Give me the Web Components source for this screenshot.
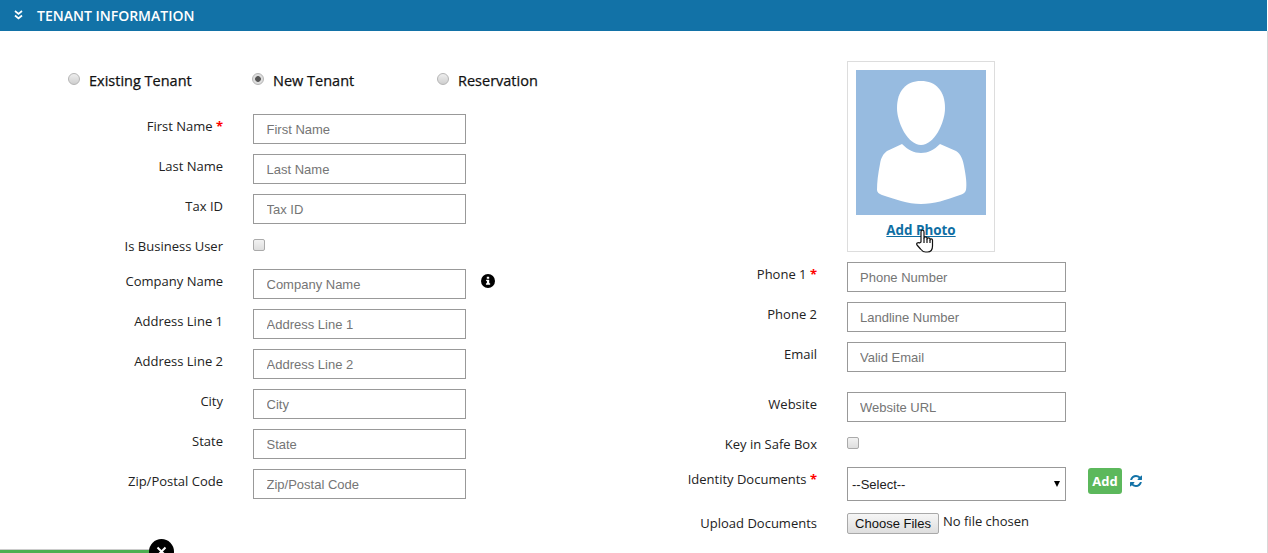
<!DOCTYPE html>
<html>
<head>
<meta charset="utf-8">
<title>Tenant Information</title>
<style>
    html, body { margin: 0; height: 100%; overflow: hidden; background: #fff; }
    body { font-family: 'Open Sans', sans-serif; color: #222; }
</style>
</head>
<body>
<tenant-page></tenant-page>

<script>
class SectionHeader extends HTMLElement {
    constructor() {
        super();
        this.attachShadow({ mode: 'open' });
        this.shadowRoot.innerHTML = `
            <style>
                :host {
                    display: flex;
                    align-items: center;
                    height: 31px;
                    margin-right: 1px;
                    padding-left: 14px;
                    gap: 14px;
                    background: #1272a7;
                    color: #fff;
                    font: 600 14px 'Open Sans', sans-serif;
                }
                svg { width: 9px; height: 10px; margin-bottom: 1px; }
            </style>
            <svg viewBox="0 0 9 10" fill="none" stroke="#fff" stroke-width="1.7">
                <path d="M1 1l3.500 3L8 1M1 5.500l3.500 3 3.500-3"/>
            </svg>
            <slot></slot>
        `;
    }
}

class RadioOption extends HTMLElement {
    constructor() {
        super();
        this.attachShadow({ mode: 'open' });
        this.shadowRoot.innerHTML = `
            <style>
                :host {
                    display: flex;
                    align-items: center;
                    gap: 9px;
                    font: 400 14.5px 'Open Sans', sans-serif;
                    -webkit-text-stroke: 0.25px #111;
                    color: #111;
                }
                input {
                    appearance: none;
                    margin: 0 0 3px;
                    width: 12px;
                    height: 12px;
                    border-radius: 50%;
                    border: 1px solid #b5b5b5;
                    background: linear-gradient(#eee, #cfcfcf);
                }
                input:checked {
                    background: radial-gradient(circle, #555 0 2.5px, #ddd 3.2px);
                }
            </style>
            <input type="radio" name="tenant-type">
            <slot></slot>
        `;
    }

    connectedCallback() {
        this.shadowRoot.querySelector('input').checked = this.hasAttribute('checked');
    }
}

class FormRow extends HTMLElement {
    constructor() {
        super();
        this.attachShadow({ mode: 'open' });
        this.shadowRoot.innerHTML = `
            <style>
                :host {
                    display: grid;
                    grid-template-columns: var(--label-width) auto;
                    column-gap: 30px;
                    justify-content: start;
                    align-items: start;
                    font: 400 13px/18px 'Open Sans', sans-serif;
                    color: #222;
                }
                .label { text-align: right; margin-top: var(--label-top, 3px); white-space: nowrap; }
                .req { color: #f00; font-weight: 700; }
                .control { display: flex; align-items: flex-start; }
            </style>
            <div class="label"><span id="text"></span><span class="req" id="req" hidden> *</span></div>
            <div class="control"><slot></slot></div>
        `;
    }

    connectedCallback() {
        this.shadowRoot.getElementById('text').textContent = this.getAttribute('label');
        this.shadowRoot.getElementById('req').hidden = !this.hasAttribute('required');
    }
}

class TextField extends HTMLElement {
    constructor() {
        super();
        this.attachShadow({ mode: 'open' });
        this.shadowRoot.innerHTML = `
            <style>
                :host { display: block; width: var(--field-width); }
                input {
                    display: block;
                    box-sizing: border-box;
                    width: 100%;
                    height: 30px;
                    padding: 0 12px 0 var(--field-pad, 12px);
                    border: 1px solid #999;
                    border-radius: 0;
                    outline: none;
                    font: 13px 'Liberation Sans', Arial, sans-serif;
                    color: #333;
                }
                input::placeholder { color: #757575; opacity: 1; }
            </style>
            <input type="text">
        `;
    }

    connectedCallback() {
        this.shadowRoot.querySelector('input').placeholder = this.getAttribute('placeholder');
    }
}

class CheckField extends HTMLElement {
    constructor() {
        super();
        this.attachShadow({ mode: 'open' });
        this.shadowRoot.innerHTML = `
            <style>
                :host { display: block; height: 13px; }
                input {
                    appearance: none;
                    display: block;
                    margin: 0;
                    width: 12px;
                    height: 12px;
                    border-radius: 2px;
                    border: 1px solid #aaa;
                    background: linear-gradient(#f2f2f2, #dedede);
                }
            </style>
            <input type="checkbox">
        `;
    }
}

class PhotoCard extends HTMLElement {
    constructor() {
        super();
        this.attachShadow({ mode: 'open' });
        this.shadowRoot.innerHTML = `
            <style>
                :host {
                    display: block;
                    position: relative;
                    box-sizing: border-box;
                    width: 148px;
                    height: 191px;
                    padding: 8px 8px 0;
                    border: 1px solid #ddd;
                    text-align: center;
                }
                .avatar { display: block; width: 130px; height: 145px; }
                a {
                    display: inline-block;
                    margin-top: 6px;
                    font: 700 13.4px/18px 'Open Sans', sans-serif;
                    color: #0f6ea3;
                    text-decoration: underline;
                }
                .hand { position: absolute; left: 67px; top: 167px; width: 19px; height: 24px; }
            </style>
            <svg class="avatar" viewBox="0 0 130 145">
                <rect width="130" height="145" fill="#97bbe0"/>
                <path fill="#fff" d="M65 11C80 11 89 21 89 38C89 53 78 75 65 75C52 75 41 53 41 38C41 21 50 11 65 11Z"/>
                <path fill="#fff" d="M46 74C52 80 58 83 65 83C72 83 78 80 84 74L100 81C105 84 107 90 108 96C110 106 111 114 110 120C109 123 107 124 104 125C90 130 78 134 65 134C52 134 38 129 26 125C23 124 21 122 21 120C21 112 22 104 24 94C25 88 27 84 31 81Z"/>
            </svg>
            <a href="#"><slot></slot></a>
            <svg class="hand" viewBox="0 0 19 24" fill="#fff" stroke="#111" stroke-width="1.2" stroke-linejoin="round">
                <path d="M6 13V3c0-2.400 3-2.400 3 0v6c0-1.500 3-1.500 3 0v1c0-1.500 3-1.500 3 0v1c0-1.500 2.500-1.500 2.500 0v6c0 3-1.500 6-5 6h-2c-2.500 0-3.500-1-5-3l-3.500-4c-1.200-1.500 1-3.200 2.500-2z"/>
                <path d="M9 9v5M12 10v4M15 11v3" fill="none"/>
            </svg>
        `;
    }
}

class SelectField extends HTMLElement {
    constructor() {
        super();
        this.attachShadow({ mode: 'open' });
        this.shadowRoot.innerHTML = `
            <style>
                :host { display: block; position: relative; width: var(--field-width); }
                select {
                    appearance: none;
                    display: block;
                    box-sizing: border-box;
                    width: 100%;
                    height: 34px;
                    padding: 0 4px;
                    border: 1px solid #999;
                    border-radius: 0;
                    background: #fff;
                    font: 13px 'Liberation Sans', Arial, sans-serif;
                    color: #222;
                }
                :host::after {
                    content: '';
                    position: absolute;
                    right: 6px;
                    top: 14px;
                    border: 3.5px solid transparent;
                    border-top: 6px solid #000;
                    border-bottom: 0;
                }
            </style>
            <select><option>--Select--</option></select>
        `;
    }
}

class AddActions extends HTMLElement {
    constructor() {
        super();
        this.attachShadow({ mode: 'open' });
        this.shadowRoot.innerHTML = `
            <style>
                :host { display: flex; align-items: center; gap: 7px; margin: 1px 0 0 22px; height: 26px; }
                button {
                    box-sizing: border-box;
                    width: 34px;
                    height: 26px;
                    padding: 0;
                    border: 0;
                    border-radius: 3px;
                    background: #5cb85c;
                    color: #fff;
                    font: 700 13px 'Open Sans', sans-serif;
                }
                svg { width: 14px; height: 14px; }
            </style>
            <button>Add</button>
            <svg viewBox="0 0 1792 1792"><path fill="#1272a7" d="M1639 1056q0 5-1 7-64 268-268 434.5t-478 166.5q-146 0-282.5-55t-243.5-157l-129 129q-19 19-45 19t-45-19-19-45v-448q0-26 19-45t45-19h448q26 0 45 19t19 45-19 45l-137 137q71 66 161 102t187 36q134 0 250-65t186-179q11-17 53-117 8-23 30-23h192q13 0 22.5 9.5t9.5 22.5zm25-800v448q0 26-19 45t-45 19h-448q-26 0-45-19t-19-45 19-45l138-138q-148-137-349-137-134 0-250 65t-186 179q-11 17-53 117-8 23-30 23h-199q-13 0-22.5-9.5t-9.5-22.5v-7q65-268 270-434.5t480-166.5q146 0 284 55.5t245 156.5l130-129q19-19 45-19t45 19 19 45z"/></svg>
        `;
    }
}

class FilePicker extends HTMLElement {
    constructor() {
        super();
        this.attachShadow({ mode: 'open' });
        this.shadowRoot.innerHTML = `
            <style>
                :host { display: flex; align-items: flex-start; gap: 4px; }
                button {
                    box-sizing: border-box;
                    width: 92px;
                    height: 21px;
                    padding: 0;
                    border: 1px solid #a9a9a9;
                    border-radius: 2px;
                    background: linear-gradient(#f6f6f6, #dedede);
                    color: #111;
                    font: 13px 'Liberation Sans', Arial, sans-serif;
                }
                span { font: 400 13px/16px 'Open Sans', sans-serif; color: #222; }
            </style>
            <button>Choose Files</button>
            <span>No file chosen</span>
        `;
    }
}

class InfoIcon extends HTMLElement {
    constructor() {
        super();
        this.attachShadow({ mode: 'open' });
        this.shadowRoot.innerHTML = `
            <style>
                :host { display: block; width: 14px; height: 14px; margin: 5px 0 0 15px; }
                svg { display: block; width: 14px; height: 14px; }
            </style>
            <svg viewBox="0 0 15 15">
                <circle cx="7.500" cy="7.500" r="7.500" fill="#000"/>
                <path fill="#fff" d="M6.200 3h2.600v2H6.200zM5.500 6.200h3.300V10h1v1.500H5.300V10h1V7.600h-.8z"/>
            </svg>
        `;
    }
}

class StatusBar extends HTMLElement {
    constructor() {
        super();
        this.attachShadow({ mode: 'open' });
        this.shadowRoot.innerHTML = `
            <style>
                :host {
                    position: absolute;
                    left: 0;
                    bottom: 0;
                    width: 150px;
                    height: 3px;
                    background: #4caf50;
                    border-top: 1px solid #ccc;
                }
                .close {
                    position: absolute;
                    left: 149px;
                    top: -11px;
                    width: 25px;
                    height: 25px;
                    border-radius: 50%;
                    background: #000;
                }
                svg { display: block; width: 25px; height: 25px; }
            </style>
            <div class="close">
                <svg viewBox="0 0 25 25" stroke="#fff" stroke-width="2"><path d="M8.500 8.500l8 8M16.500 8.500l-8 8"/></svg>
            </div>
        `;
    }
}

class TenantPage extends HTMLElement {
    constructor() {
        super();
        this.attachShadow({ mode: 'open' });
        this.shadowRoot.innerHTML = `
            <style>
                :host { display: block; position: relative; height: 553px; overflow: hidden; }
                .body {
                    display: grid;
                    grid-template-columns: 627px 1fr;
                    box-sizing: border-box;
                    height: 522px;
                    padding-top: 30px;
                    border-right: 1px solid #d8d8d8;
                }
                .left { --label-width: 223px; --field-width: 213px; --field-pad: 12.5px; }
                .right { --label-width: 190px; --field-width: 219px; }
                .types { display: flex; margin: 8px 0 0 68px; height: 22px; }
                .types radio-option:nth-child(1) { width: 184px; }
                .types radio-option:nth-child(2) { width: 185px; }
                .rows { display: flex; flex-direction: column; margin-top: 23px; }
                .rows > * { margin-bottom: 10px; }
                .rows > .check-row { --label-top: -2px; height: 13px; margin-top: 5px; margin-bottom: 17px; }
                .photo { margin-left: 220px; margin-bottom: 10px; }
            </style>
            <section-header>TENANT INFORMATION</section-header>
            <div class="body">
                <div class="left">
                    <div class="types">
                        <radio-option>Existing Tenant</radio-option>
                        <radio-option checked>New Tenant</radio-option>
                        <radio-option>Reservation</radio-option>
                    </div>
                    <div class="rows">
                        <form-row label="First Name" required><text-field placeholder="First Name"></text-field></form-row>
                        <form-row label="Last Name"><text-field placeholder="Last Name"></text-field></form-row>
                        <form-row label="Tax ID"><text-field placeholder="Tax ID"></text-field></form-row>
                        <form-row class="check-row" label="Is Business User"><check-field></check-field></form-row>
                        <form-row label="Company Name"><text-field placeholder="Company Name"></text-field><info-icon></info-icon></form-row>
                        <form-row label="Address Line 1"><text-field placeholder="Address Line 1"></text-field></form-row>
                        <form-row label="Address Line 2"><text-field placeholder="Address Line 2"></text-field></form-row>
                        <form-row label="City"><text-field placeholder="City"></text-field></form-row>
                        <form-row label="State"><text-field placeholder="State"></text-field></form-row>
                        <form-row label="Zip/Postal Code"><text-field placeholder="Zip/Postal Code"></text-field></form-row>
                    </div>
                </div>
                <div class="right">
                    <photo-card class="photo">Add Photo</photo-card>
                    <form-row label="Phone 1" required style="margin-bottom:10px"><text-field placeholder="Phone Number"></text-field></form-row>
                    <form-row label="Phone 2" style="margin-bottom:10px"><text-field placeholder="Landline Number"></text-field></form-row>
                    <form-row label="Email" style="margin-bottom:20px"><text-field placeholder="Valid Email"></text-field></form-row>
                    <form-row label="Website" style="margin-bottom:15px"><text-field placeholder="Website URL"></text-field></form-row>
                    <form-row label="Key in Safe Box" style="--label-top:-2px;height:13px;margin-bottom:17px"><check-field></check-field></form-row>
                    <form-row label="Identity Documents" required style="margin-bottom:12px"><select-field></select-field><add-actions></add-actions></form-row>
                    <form-row label="Upload Documents" style="--label-top:1px"><file-picker></file-picker></form-row>
                </div>
            </div>
            <status-bar></status-bar>
        `;
    }
}

customElements.define('section-header', SectionHeader);
customElements.define('radio-option', RadioOption);
customElements.define('form-row', FormRow);
customElements.define('text-field', TextField);
customElements.define('check-field', CheckField);
customElements.define('photo-card', PhotoCard);
customElements.define('select-field', SelectField);
customElements.define('add-actions', AddActions);
customElements.define('file-picker', FilePicker);
customElements.define('info-icon', InfoIcon);
customElements.define('status-bar', StatusBar);
customElements.define('tenant-page', TenantPage);
</script>
</body>
</html>
